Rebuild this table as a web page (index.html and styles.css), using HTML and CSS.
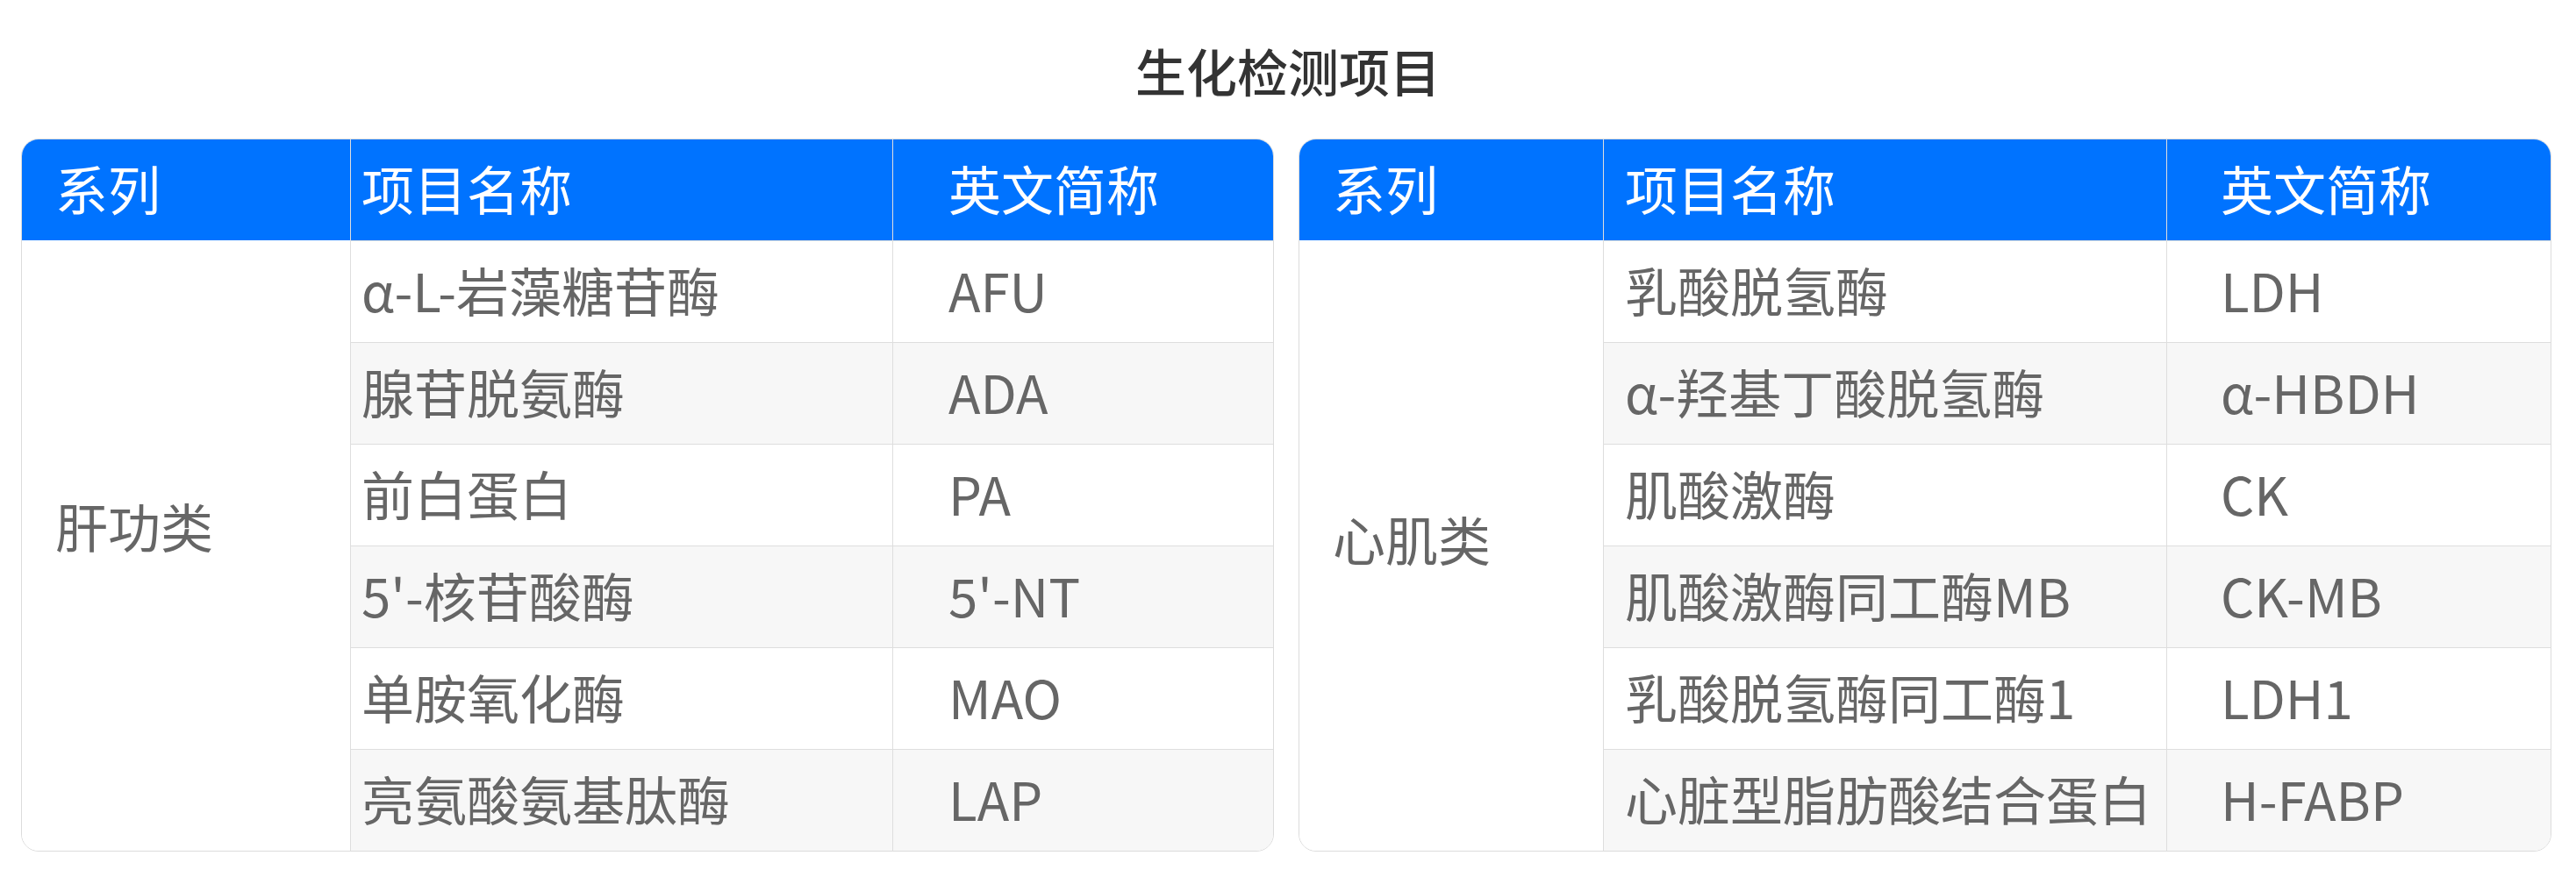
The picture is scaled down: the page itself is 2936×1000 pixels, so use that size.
FILE: index.html
```html
<!DOCTYPE html>
<html>
<head>
    <title>生化检测项目</title>
    <meta charset="utf-8">
    <meta name="viewport" content="width=device-width, initial-scale=1">
    <link rel="stylesheet" href="styles.css">
</head>
<body>
    <h1 class="page-title">生化检测项目</h1>
    <div class="tables">
        <div class="table-card table-liver">
            <table class="item-table">
                <colgroup>
                    <col class="col-series">
                    <col class="col-name">
                    <col class="col-abbr">
                </colgroup>
                <thead>
                    <tr>
                        <th class="c-series">系列</th>
                        <th class="c-name">项目名称</th>
                        <th class="c-abbr">英文简称</th>
                    </tr>
                </thead>
                <tbody>
                    <tr>
                        <td class="c-series group" rowspan="6">肝功类</td>
                        <td class="c-name">α-L-岩藻糖苷酶</td>
                        <td class="c-abbr">AFU</td>
                    </tr>
                    <tr class="alt">
                        <td class="c-name">腺苷脱氨酶</td>
                        <td class="c-abbr">ADA</td>
                    </tr>
                    <tr>
                        <td class="c-name">前白蛋白</td>
                        <td class="c-abbr">PA</td>
                    </tr>
                    <tr class="alt">
                        <td class="c-name">5'-核苷酸酶</td>
                        <td class="c-abbr">5'-NT</td>
                    </tr>
                    <tr>
                        <td class="c-name">单胺氧化酶</td>
                        <td class="c-abbr">MAO</td>
                    </tr>
                    <tr class="alt">
                        <td class="c-name">亮氨酸氨基肽酶</td>
                        <td class="c-abbr">LAP</td>
                    </tr>
                </tbody>
            </table>
        </div>
        <div class="table-card table-heart">
            <table class="item-table">
                <colgroup>
                    <col class="col-series">
                    <col class="col-name">
                    <col class="col-abbr">
                </colgroup>
                <thead>
                    <tr>
                        <th class="c-series">系列</th>
                        <th class="c-name">项目名称</th>
                        <th class="c-abbr">英文简称</th>
                    </tr>
                </thead>
                <tbody>
                    <tr>
                        <td class="c-series group" rowspan="6">心肌类</td>
                        <td class="c-name">乳酸脱氢酶</td>
                        <td class="c-abbr">LDH</td>
                    </tr>
                    <tr class="alt">
                        <td class="c-name">α-羟基丁酸脱氢酶</td>
                        <td class="c-abbr">α-HBDH</td>
                    </tr>
                    <tr>
                        <td class="c-name">肌酸激酶</td>
                        <td class="c-abbr">CK</td>
                    </tr>
                    <tr class="alt">
                        <td class="c-name">肌酸激酶同工酶MB</td>
                        <td class="c-abbr">CK-MB</td>
                    </tr>
                    <tr>
                        <td class="c-name">乳酸脱氢酶同工酶1</td>
                        <td class="c-abbr">LDH1</td>
                    </tr>
                    <tr class="alt">
                        <td class="c-name">心脏型脂肪酸结合蛋白</td>
                        <td class="c-abbr">H-FABP</td>
                    </tr>
                </tbody>
            </table>
        </div>
    </div>
</body>
</html>
```

FILE: styles.css
```css
body {
    margin: 0;
    background: #fff;
    font-family: "Noto Sans CJK SC", "Noto Sans", sans-serif;
}

.page-title {
    margin: 0;
    padding-top: 40px;
    height: 158px;
    box-sizing: border-box;
    line-height: 80px;
    font-size: 58px;
    font-weight: 500;
    color: #333;
    text-align: center;
}

.tables {
    display: flex;
    gap: 28px;
    padding: 0 28px 0 24px;
}

.table-card {
    flex: 1;
    border: 1px solid #dcdcdc;
    border-radius: 20px;
    overflow: hidden;
}

.item-table {
    width: 100%;
    table-layout: fixed;
    border-collapse: separate;
    border-spacing: 0;
}

.table-liver .col-series { width: 374px; }
.table-liver .col-name { width: 618px; }
.table-heart .col-series { width: 346px; }
.table-heart .col-name { width: 642px; }

.item-table th,
.item-table td {
    box-sizing: border-box;
    padding: 0;
    text-align: left;
    vertical-align: middle;
    white-space: nowrap;
    font-size: 60px;
    font-weight: 400;
}

.item-table th {
    height: 115px;
    padding-bottom: 6px;
    background: #0073ff;
    color: #fff;
}

.item-table td {
    height: 116px;
    padding-bottom: 6px;
    color: #666;
    border-top: 1px solid #dedede;
}

.item-table th + th,
.item-table td + td,
.item-table td.c-name {
    border-left: 1px solid #dedede;
}

.item-table td.group {
    border-top: none;
    background: #fff;
}

.item-table tr.alt td {
    background: #f7f7f7;
}

.c-series { padding-left: 38px !important; }
.c-abbr { padding-left: 63px !important; }

.table-liver .c-name { padding-left: 12px !important; }
.table-heart .c-name { padding-left: 24px !important; }
.table-heart .c-abbr { padding-left: 61px !important; }

.table-liver td.group { padding-bottom: 48px; }
.table-heart td.group { padding-bottom: 18px; }
```
